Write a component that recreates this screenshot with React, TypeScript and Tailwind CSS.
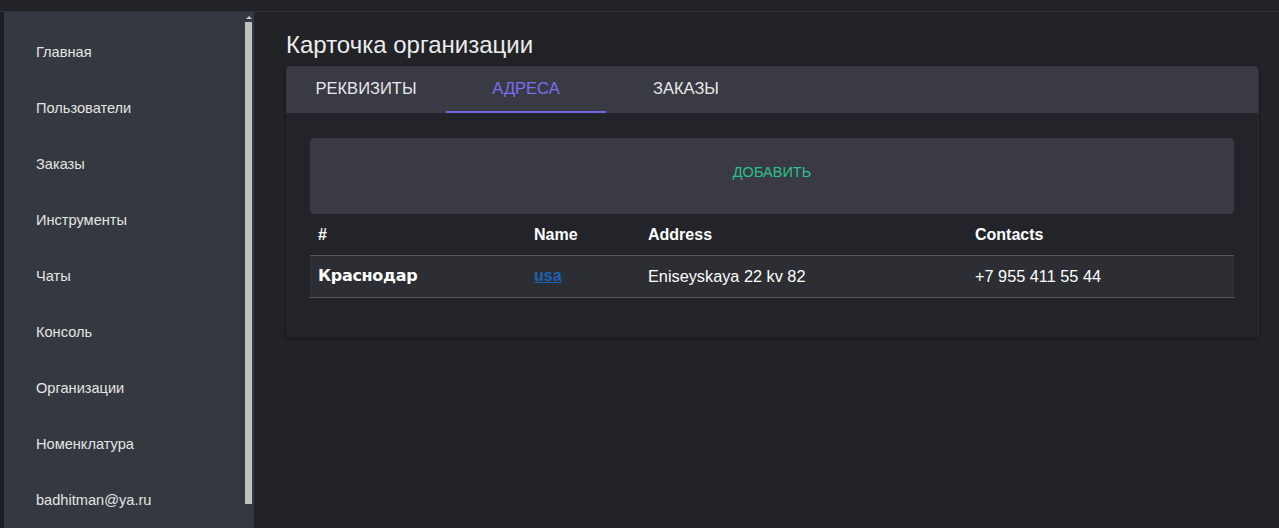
import * as React from "react";

const menu = [
  "Главная",
  "Пользователи",
  "Заказы",
  "Инструменты",
  "Чаты",
  "Консоль",
  "Организации",
  "Номенклатура",
  "badhitman@ya.ru",
];

const tabs = ["Реквизиты", "Адреса", "Заказы"];

const App: React.FC = () => {
  const [active, setActive] = React.useState(1);

  return (
    <div
      className="h-screen overflow-hidden bg-[#212327] text-[#e6e6e6] flex flex-col"
      style={{ fontFamily: '"Liberation Sans", Arial, sans-serif' }}
    >
      {/* Top bar */}
      <div className="h-[12px] shrink-0 bg-[#202226] border-b border-[#30333a]" />

      <div className="flex flex-1 min-h-0">
        {/* Sidebar */}
        <div className="w-[4px] shrink-0 bg-[#1c1d21]" />
        <aside className="w-[250px] shrink-0 bg-[#343941] flex">
          <nav className="flex-1 flex flex-col pt-[13px]">
            {menu.map((item) => (
              <a
                key={item}
                className="h-[56px] shrink-0 flex items-center pl-[32px] text-[14.6px] text-[#e4e4e4] cursor-pointer"
              >
                {item}
              </a>
            ))}
          </nav>
          {/* Scrollbar */}
          <div className="w-[9px] mr-[1px] flex flex-col items-center pt-[4px]">
            <div className="w-0 h-0 border-l-[3px] border-r-[3px] border-b-[3px] border-l-transparent border-r-transparent border-b-[#c8c8c8]" />
            <div className="w-[7px] h-[482px] mt-[3px] bg-[#c1c1c1]" />
          </div>
        </aside>

        {/* Main */}
        <main className="flex-1 pl-[32px] pr-[20px] pt-[19px]">
          <h1 className="text-[24px] leading-[28px] text-[#ececec] mb-[7px]">
            Карточка организации
          </h1>

          <div className="rounded-[4px] bg-[#222429] shadow-[0_1px_3px_rgba(0,0,0,0.5)] border-r border-[#2b2d33]">
            <div className="flex h-[47px] bg-[#393a43] rounded-t-[4px]">
              {tabs.map((t, i) => (
                <button
                  key={t}
                  onClick={() => setActive(i)}
                  className={
                    "w-[160px] h-full flex items-center justify-center text-[16.5px] uppercase border-b-2 " +
                    (i === active
                      ? "text-[#7b6ff0] border-[#7367e6]"
                      : "text-[#e8e8e8] border-transparent")
                  }
                >
                  {t}
                </button>
              ))}
            </div>

            <div className="px-[24px] pt-[25px] pb-[40px]">
              <button className="w-full h-[76px] pb-[7px] rounded-[4px] bg-[#393a43] text-[14.5px] uppercase text-[#2cc08e]">
                Добавить
              </button>

              <table className="w-full border-collapse text-[16px] text-white">
                <thead>
                  <tr className="h-[41px] border-b border-[#55575c]">
                    <th className="w-[216px] text-left font-bold px-[8px] pt-[2px]">#</th>
                    <th className="w-[114px] text-left font-bold px-[8px] pt-[2px]">Name</th>
                    <th className="w-[327px] text-left font-bold px-[8px] pt-[2px]">Address</th>
                    <th className="text-left font-bold px-[8px] pt-[2px]">Contacts</th>
                  </tr>
                </thead>
                <tbody>
                  <tr className="h-[42px] bg-[#2c2e33] border-b border-[#55575c]">
                    <td
                      className="px-[8px] font-bold"
                      style={{ fontFamily: '"DejaVu Sans", "Liberation Sans", sans-serif' }}
                    >
                      <span className="text-[16px] tracking-[-0.3px]">Краснодар</span>
                    </td>
                    <td className="px-[8px]">
                      <a className="text-[#1e64b4] font-bold underline cursor-pointer">usa</a>
                    </td>
                    <td className="px-[8px] text-[16.3px]">Eniseyskaya 22 kv 82</td>
                    <td className="px-[8px] text-[16.3px]">+7 955 411 55 44</td>
                  </tr>
                </tbody>
              </table>
            </div>
          </div>
        </main>
      </div>
    </div>
  );
};

export default App;
